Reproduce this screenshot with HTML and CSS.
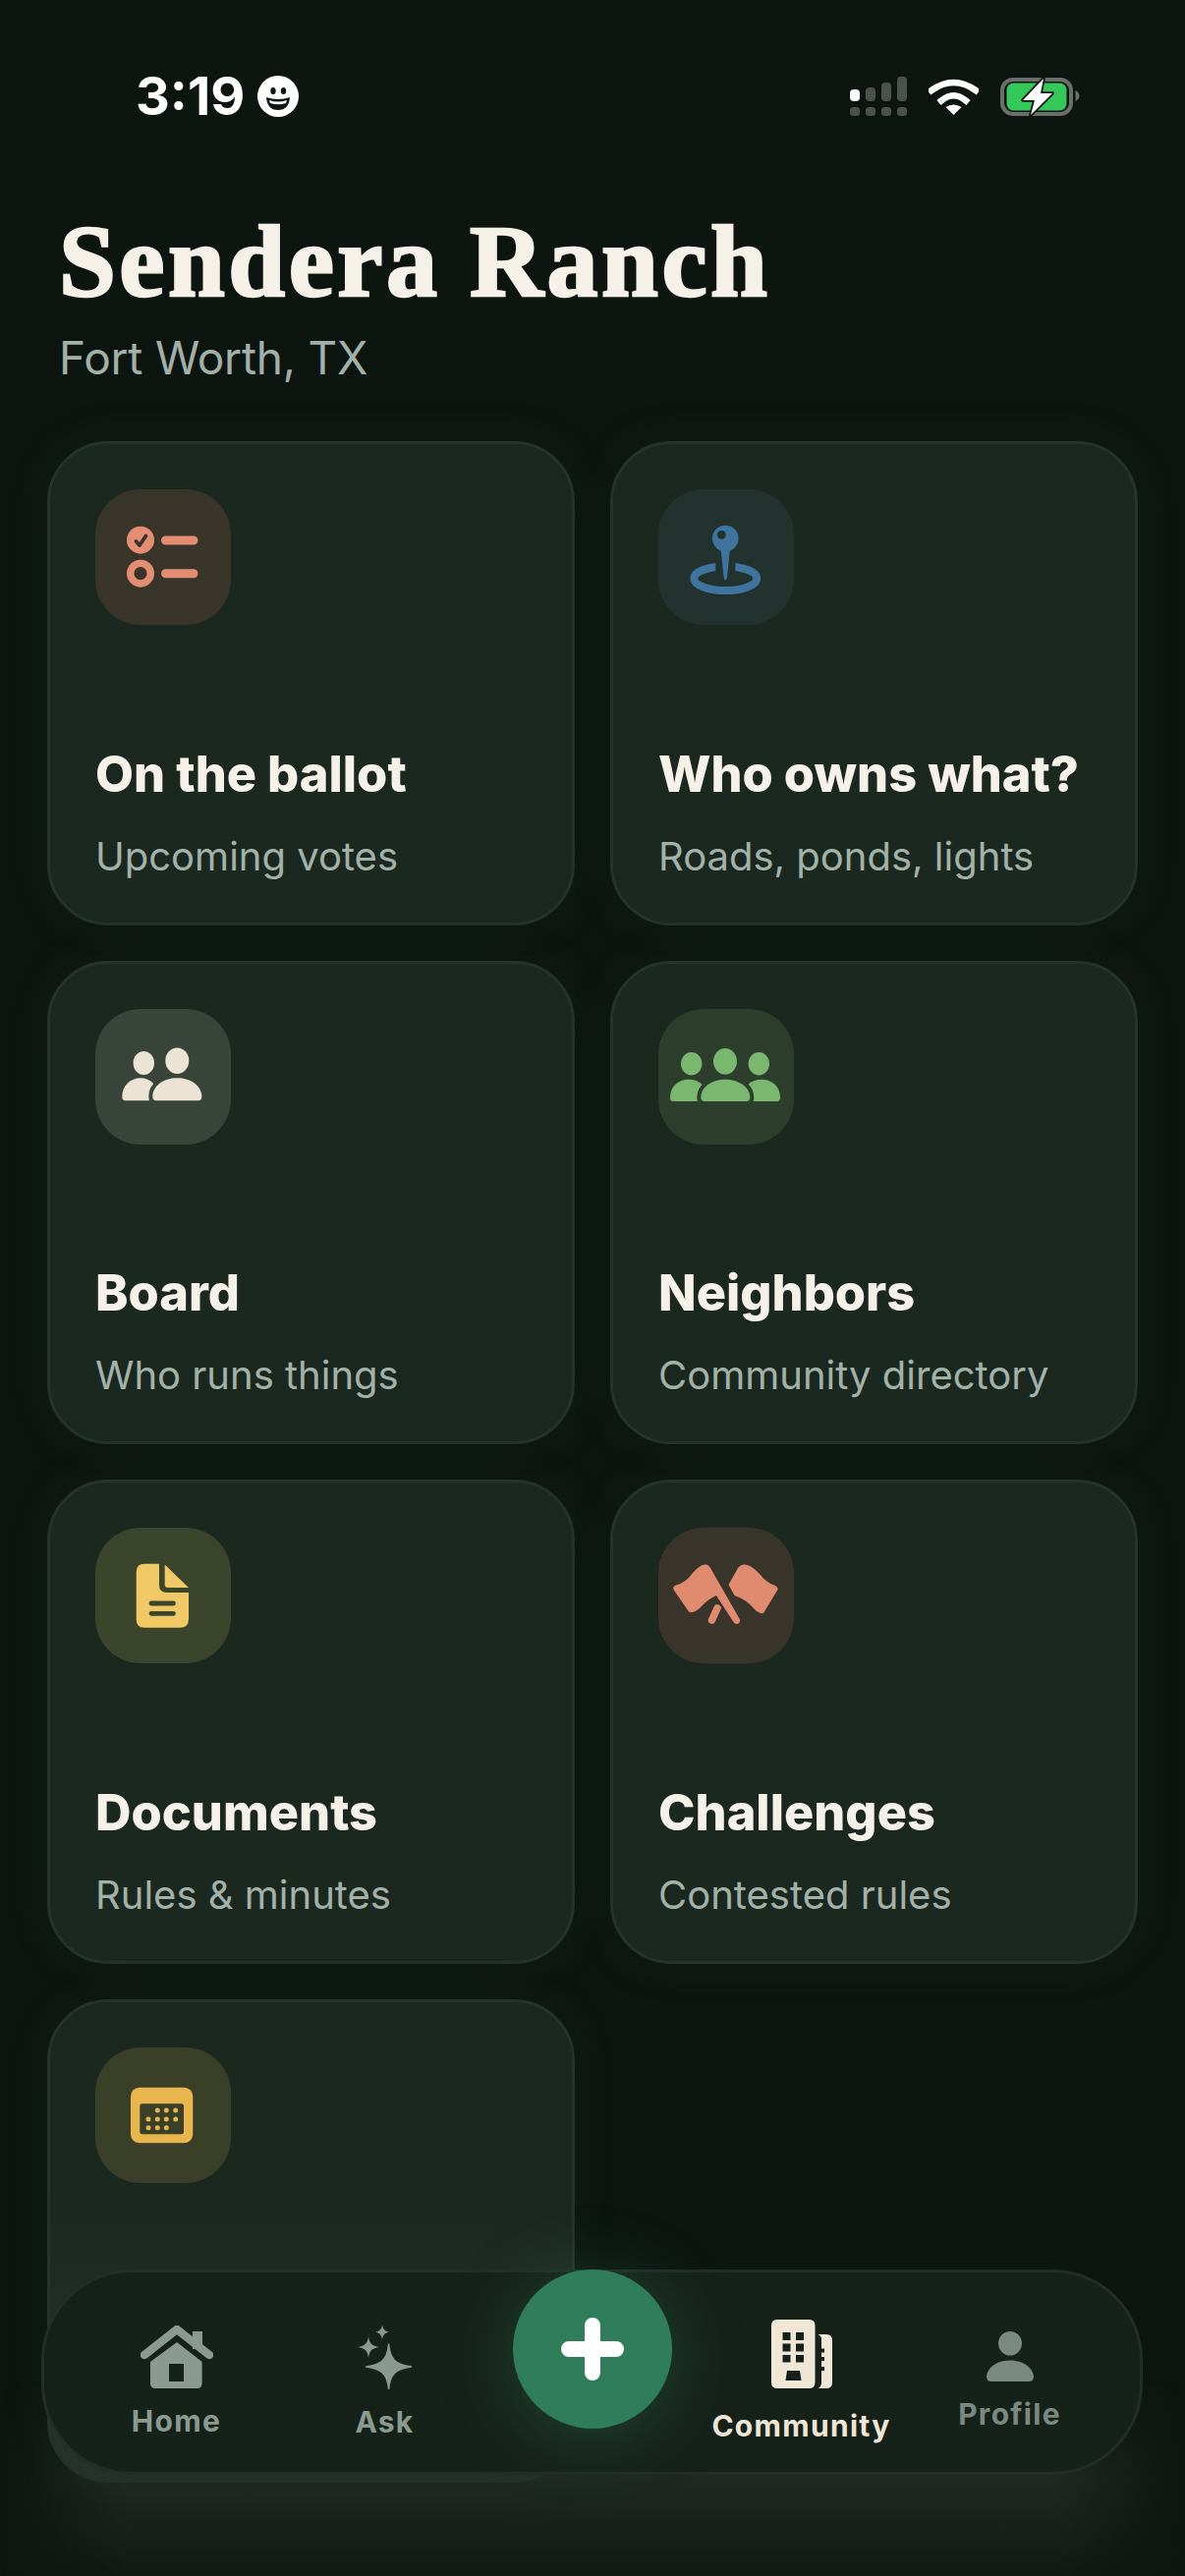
FILE: index.html
```html
<!DOCTYPE html>
<html lang="en">
<head>
    <title>Sendera Ranch</title>
    <link rel="stylesheet" href="styles.css">
</head>
<body>
<div class="screen">
    <!-- Status bar -->
    <div class="status">
        <div class="clock">
            <span>3:19</span>
            <svg class="smile" viewBox="0 0 42 42">
                <circle cx="21" cy="21" r="21" fill="#fff"/>
                <ellipse cx="16" cy="15.500" rx="2.700" ry="3.500" fill="#0d1510"/>
                <ellipse cx="26.500" cy="15.500" rx="2.700" ry="3.500" fill="#0d1510"/>
                <path d="M9 22Q21 26 33 22Q32 35 21 35Q10 35 9 22Z" fill="#0d1510"/>
                <path d="M12 25Q21 28 30 25L29 28Q21 30.500 13 28Z" fill="#fff"/>
            </svg>
        </div>
        <div class="indicators">
            <svg class="signal" viewBox="0 0 58 40">
                <rect x="0" y="13" width="10" height="12" rx="4" fill="#fff"/>
                <rect x="16" y="11" width="10" height="14" rx="4" fill="#4c514e"/>
                <rect x="32" y="6" width="10" height="19" rx="4" fill="#4c514e"/>
                <rect x="48" y="0" width="10" height="25" rx="4" fill="#4c514e"/>
                <rect x="0" y="31" width="10" height="9" rx="3.500" fill="#4c514e"/>
                <rect x="16" y="31" width="10" height="9" rx="3.500" fill="#4c514e"/>
                <rect x="32" y="31" width="10" height="9" rx="3.500" fill="#4c514e"/>
                <rect x="48" y="31" width="10" height="9" rx="3.500" fill="#4c514e"/>
            </svg>
            <svg class="wifi" viewBox="0 0 51 38">
                <path d="M3 13Q25.500-3 48 13" fill="none" stroke="#fff" stroke-width="6.500" stroke-linecap="square"/>
                <path d="M13 23.500Q25.500 13 38 23.500" fill="none" stroke="#fff" stroke-width="6.500" stroke-linecap="square"/>
                <path d="M17.500 30Q25.500 25 33.500 30L25.500 38Z" fill="#fff"/>
            </svg>
            <svg class="battery" viewBox="0 0 82 39">
                <rect x="2" y="2" width="70" height="35" rx="11" fill="none" stroke="#6b6e6c" stroke-width="4"/>
                <rect x="6.500" y="5.500" width="61" height="28" rx="7" fill="#34c759"/>
                <path d="M76.500 13Q80.500 15 80.500 18.500Q80.500 22 76.500 24Z" fill="#6b6e6c"/>
                <path d="M44 1L23 23H35L31 38L53 16H41Z" fill="#fff" stroke="#0d1510" stroke-width="3.500" paint-order="stroke" stroke-linejoin="round"/>
            </svg>
        </div>
    </div>

    <div class="header">
        <h1>Sendera Ranch</h1>
        <p>Fort Worth, TX</p>
    </div>

    <!-- Cards -->
    <div class="grid">
        <div class="card">
            <div class="tile tile-coral">
                <svg viewBox="0 0 138 138">
                    <circle cx="46" cy="51.700" r="14" fill="#e58d72"/>
                    <path d="M41.500 53L45 57L51.500 47.500" fill="none" stroke="#3a352b" stroke-width="3.800" stroke-linecap="round" stroke-linejoin="round"/>
                    <circle cx="46" cy="85.700" r="10.300" fill="none" stroke="#e58d72" stroke-width="7.400"/>
                    <path d="M71.500 52H100M71.500 85.700H100" stroke="#e58d72" stroke-width="9" stroke-linecap="round"/>
                </svg>
            </div>
            <h2>On the ballot</h2>
            <p>Upcoming votes</p>
        </div>
        <div class="card">
            <div class="tile tile-blue">
                <svg viewBox="0 0 138 138">
                    <ellipse cx="68.300" cy="90.700" rx="32" ry="12.300" fill="none" stroke="#3f749f" stroke-width="8"/>
                    <path d="M68.300 50V92" stroke="#22332f" stroke-width="20"/>
                    <path d="M63 55H73.600L70 90Q68.300 95 66.600 90Z" fill="#3f749f"/>
                    <circle cx="68.300" cy="50" r="13.300" fill="#3f749f"/>
                    <circle cx="64.300" cy="46.300" r="4.400" fill="#22332f"/>
                </svg>
            </div>
            <h2>Who owns what?</h2>
            <p>Roads, ponds, lights</p>
        </div>
        <div class="card">
            <div class="tile tile-cream">
                <svg viewBox="0 0 138 138">
                    <ellipse cx="49.300" cy="55" rx="10.700" ry="12" fill="#ebe3d3"/>
                    <ellipse cx="83.300" cy="52.700" rx="12" ry="13.300" fill="#ebe3d3"/>
                    <path d="M31 93.300Q27.300 93.300 27.300 89C27.300 78 36 70.300 46 70.300C56 70.300 64 78 64 89V93.300Z" fill="#ebe3d3"/>
                    <path d="M62 93.300Q58.300 93.300 58.300 89C58.300 78 70 70.300 83.300 70.300C96.600 70.300 108.300 78 108.300 89Q108.300 93.300 104.600 93.300Z" fill="#ebe3d3" stroke="#39453b" stroke-width="8" paint-order="stroke"/>
                </svg>
            </div>
            <h2>Board</h2>
            <p>Who runs things</p>
        </div>
        <div class="card">
            <div class="tile tile-green">
                <svg viewBox="0 0 138 138">
                    <ellipse cx="33.700" cy="55.700" rx="10.700" ry="11.700" fill="#7ab870"/>
                    <ellipse cx="102.300" cy="55.700" rx="10.700" ry="11.700" fill="#7ab870"/>
                    <ellipse cx="68" cy="53.300" rx="12" ry="13.300" fill="#7ab870"/>
                    <path d="M15 94Q12 94 12 90C12 79 20 71.700 31 71.700C42 71.700 50 79 50 90V94Z" fill="#7ab870"/>
                    <path d="M121 94Q124 94 124 90C124 79 116 71.700 105 71.700C94 71.700 86 79 86 90V94Z" fill="#7ab870"/>
                    <path d="M47 94Q43.300 94 43.300 90C43.300 79 55 71.700 68 71.700C81 71.700 93.300 79 93.300 90Q93.300 94 89.600 94Z" fill="#7ab870" stroke="#2d3f2c" stroke-width="8" paint-order="stroke"/>
                </svg>
            </div>
            <h2>Neighbors</h2>
            <p>Community directory</p>
        </div>
        <div class="card">
            <div class="tile tile-yellow">
                <svg viewBox="0 0 138 138">
                    <path d="M50 36.700H65V58Q65 66 73 66H95V93Q95 101.700 86 101.700H50Q41.700 101.700 41.700 93V45Q41.700 36.700 50 36.700Z" fill="#f0c866"/>
                    <path d="M70.700 37.500L95 61H74Q70.700 61 70.700 57.700Z" fill="#f0c866"/>
                    <path d="M57 77H79.500M57 87.300H79.500" stroke="#3b452b" stroke-width="4.800" stroke-linecap="round"/>
                </svg>
            </div>
            <h2>Documents</h2>
            <p>Rules &amp; minutes</p>
        </div>
        <div class="card">
            <div class="tile tile-coral">
                <svg viewBox="0 0 138 138">
                    <path d="M47 37.500Q51 37 53 41L82.800 93Q84 97 80.500 98Q78 98.500 76.500 96L59 69Q50 73 43 81Q36 88 31 85.500L15.500 63Q14 60 18 58.500Q28 56 35 46Q42 38 47 37.500Z" fill="#e08a6f"/>
                    <path d="M88 37.500Q84 37 81 41L71.500 58L77.500 69L80 70Q90 74 96 81Q102 88 107 87L121.500 63Q122 60 118 58.500Q110 56 103 47Q95 38 88 37.500Z" fill="#e08a6f"/>
                    <path d="M60 82L54.500 94" stroke="#e08a6f" stroke-width="7.500" stroke-linecap="round"/>
                </svg>
            </div>
            <h2>Challenges</h2>
            <p>Contested rules</p>
        </div>
        <div class="card card-last">
            <div class="tile tile-amber">
                <svg viewBox="0 0 138 138">
                    <rect x="36" y="40.700" width="63.300" height="56.600" rx="9" fill="#e8b64c"/>
                    <rect x="45.300" y="57.300" width="44.700" height="31" rx="2.500" fill="#3a3f28"/>
                    <g fill="#e8b64c">
                        <circle cx="63.300" cy="64" r="2.500"/><circle cx="72.300" cy="64" r="2.500"/><circle cx="81.700" cy="64" r="2.500"/>
                        <circle cx="54" cy="73" r="2.500"/><circle cx="63.300" cy="73" r="2.500"/><circle cx="72.300" cy="73" r="2.500"/><circle cx="81.700" cy="73" r="2.500"/>
                        <circle cx="54" cy="81.700" r="2.500"/><circle cx="63.300" cy="81.700" r="2.500"/><circle cx="72.300" cy="81.700" r="2.500"/>
                    </g>
                </svg>
            </div>
        </div>
    </div>

    <div class="fade"></div>

    <!-- Tab bar -->
    <div class="tabbar">
        <div class="tab">
            <svg class="ic-home" viewBox="0 0 74 64">
                <path d="M53 6H63V24H53Z" fill="#8a9a90"/>
                <path d="M4 30L37 4L70 30" fill="none" stroke="#8a9a90" stroke-width="8.500" stroke-linecap="round" stroke-linejoin="round"/>
                <path d="M37 17L62.600 37V59Q62.600 64 57.600 64H15Q10 64 10 59V37Z" fill="#8a9a90"/>
                <rect x="29" y="39" width="15" height="18" fill="#16211a"/>
            </svg>
            <span>Home</span>
        </div>
        <div class="tab">
            <svg class="ic-ask" viewBox="0 0 55 66" fill="#8a9a90">
                <path d="M31.600 20C33 36 39 41 54.600 43C39 45 33 50 31.600 66C30.200 50 24 45 8.600 43C24 41 30.200 36 31.600 20Z" stroke="#8a9a90" stroke-width="1.500" stroke-linejoin="round"/>
                <path d="M11 12C11.800 19 14.500 22 22 23C14.500 24 11.800 27 11 34C10.200 27 7.500 24 0 23C7.500 22 10.200 19 11 12Z"/>
                <path d="M25 0C25.500 4.500 27.500 7 32 7.700C27.500 8.400 25.500 11 25 15.400C24.500 11 22.500 8.400 18 7.700C22.500 7 24.500 4.500 25 0Z"/>
            </svg>
            <span>Ask</span>
        </div>
        <div class="tab tab-spacer"></div>
        <div class="tab tab-active">
            <svg class="ic-community" viewBox="0 0 62 70" fill="#efe6d5">
                <path d="M6 0H38.500Q44.500 0 44.500 6V64Q44.500 70 38.500 70H6Q0 70 0 64V6Q0 0 6 0Z"/>
                <path d="M47.500 15H56Q62 15 62 21V64Q62 70 56 70H47.500Q51 68 51 64V52H54V48H51V42H54V38H51V33.500H54V29.500H51V20Q51 16.500 47.500 15Z"/>
                <g fill="#16211a">
                    <rect x="11.500" y="13" width="8" height="8"/><rect x="25" y="13" width="8" height="8"/>
                    <rect x="11.500" y="24.500" width="8" height="8"/><rect x="25" y="24.500" width="8" height="8"/>
                    <rect x="11.500" y="36" width="8" height="7.500"/><rect x="25" y="36" width="8" height="7.500"/>
                    <path d="M16 52H29L30.500 62H14.500Z"/>
                </g>
            </svg>
            <span>Community</span>
        </div>
        <div class="tab tab-dim">
            <svg class="ic-profile" viewBox="0 0 48 51" fill="#7a8a80">
                <ellipse cx="24" cy="12.300" rx="12" ry="12.300"/>
                <path d="M5 51Q0 51 0 46C1 36 12 29.500 24 29.500C36 29.500 47 36 48 46Q48 51 43 51Z"/>
            </svg>
            <span>Profile</span>
        </div>
    </div>

    <!-- Floating add button -->
    <div class="fab">
        <svg viewBox="0 0 64 64"><path d="M32 8V56M8 32H56" stroke="#fff" stroke-width="16" stroke-linecap="round"/></svg>
    </div>
</div>
</body>
</html>
```

FILE: styles.css
```css
* { box-sizing: border-box; }

body {
    margin: 0;
    background: #0d1511;
    font-family: "Inter", "Liberation Sans", sans-serif;
}

.screen {
    position: relative;
    width: 1206px;
    height: 2622px;
    overflow: hidden;
    background: #0d1511;
}

/* Status bar */
.status {
    display: flex;
    justify-content: space-between;
    align-items: center;
    height: 42px;
    margin-top: 77px;
    padding: 0 106px 0 138px;
}
.clock {
    display: flex;
    align-items: center;
    gap: 13px;
    color: #fff;
    font-size: 54px;
    font-weight: 700;
    line-height: 42px;
}
.smile { width: 42px; height: 42px; }
.indicators {
    display: flex;
    align-items: center;
    gap: 22px;
}
.signal { width: 58px; height: 40px; }
.wifi { width: 51px; height: 38px; }
.battery { width: 82px; height: 39px; }

/* Header */
.header {
    padding: 0 60px;
    margin-top: 97px;
}
.header h1 {
    margin: 0;
    color: #f6f1e8;
    font-family: "Liberation Serif", "DejaVu Serif", serif;
    font-size: 104px;
    font-weight: 700;
    line-height: 100px;
    letter-spacing: 3.500px;
    -webkit-text-stroke: 2.500px #f6f1e8;
}
.header p {
    margin: 22px 0 0;
    color: #a3b0a8;
    font-size: 46px;
    line-height: 52px;
    letter-spacing: -0.2px;
}

/* Cards */
.grid {
    display: grid;
    grid-template-columns: 1fr 1fr;
    grid-auto-rows: 492.500px;
    gap: 36px;
    padding: 0 48px;
    margin-top: 59px;
}
.card {
    display: flex;
    flex-direction: column;
    padding: 46px 46px 43px;
    background: #1b281f;
    border: 3px solid #25332a;
    border-radius: 62px;
    box-shadow: 0 0 40px rgba(38, 58, 46, 0.22);
}
.card-last { background: linear-gradient(#1b281f 40%, #29342c); }
.card h2 {
    margin: auto 0 0;
    color: #f6f1e8;
    font-size: 50.500px;
    font-weight: 800;
    line-height: 60px;
}
.card p {
    margin: 30px 0 0;
    color: #a3b2a9;
    font-size: 40px;
    line-height: 48px;
}
.tile {
    flex: none;
    width: 138px;
    height: 138px;
    border-radius: 46px;
}
.tile svg { display: block; width: 138px; height: 138px; }
.tile-coral { background: #3a352b; }
.tile-blue { background: #22332f; }
.tile-cream { background: #39453b; }
.tile-green { background: #2d3f2c; }
.tile-yellow { background: #3b452b; }
.tile-amber { background: #3a3f28; }

/* Bottom of the screen */
.fade {
    position: absolute;
    left: 0;
    right: 0;
    bottom: 0;
    height: 200px;
    background: linear-gradient(to bottom, rgba(38, 48, 40, 0), rgba(38, 48, 40, 0.75) 50%, rgba(22, 32, 26, 0.4));
    -webkit-mask-image: linear-gradient(to right, transparent, #000 130px, #000 1076px, transparent);
    mask-image: linear-gradient(to right, transparent, #000 130px, #000 1076px, transparent);
    pointer-events: none;
}
.tabbar {
    position: absolute;
    left: 42px;
    top: 2310px;
    display: grid;
    grid-template-columns: repeat(5, 212px);
    align-items: center;
    width: 1121px;
    height: 209px;
    padding: 16px 28.500px 0;
    background: #16211a;
    border: 3px solid #222e26;
    border-radius: 92px;
}
.tab {
    display: flex;
    flex-direction: column;
    align-items: center;
    gap: 18px;
    color: #8a9a90;
    font-size: 30px;
    font-weight: 700;
    line-height: 30px;
    letter-spacing: 1.3px;
}
.tab svg { display: block; }
.tab-active { gap: 23px; color: #efe6d5; }
.tab-dim { color: #7a8a80; }
.ic-home { width: 74px; height: 64px; }
.ic-ask { width: 55px; height: 66px; }
.ic-community { width: 62px; height: 70px; }
.ic-profile { width: 48px; height: 51px; }
.fab {
    position: absolute;
    left: 522px;
    top: 2310px;
    display: flex;
    align-items: center;
    justify-content: center;
    width: 162px;
    height: 162px;
    background: #2f7d5b;
    border-radius: 50%;
    box-shadow: 0 8px 70px rgba(47, 125, 91, 0.4);
}
.fab svg { width: 64px; height: 64px; }
```
